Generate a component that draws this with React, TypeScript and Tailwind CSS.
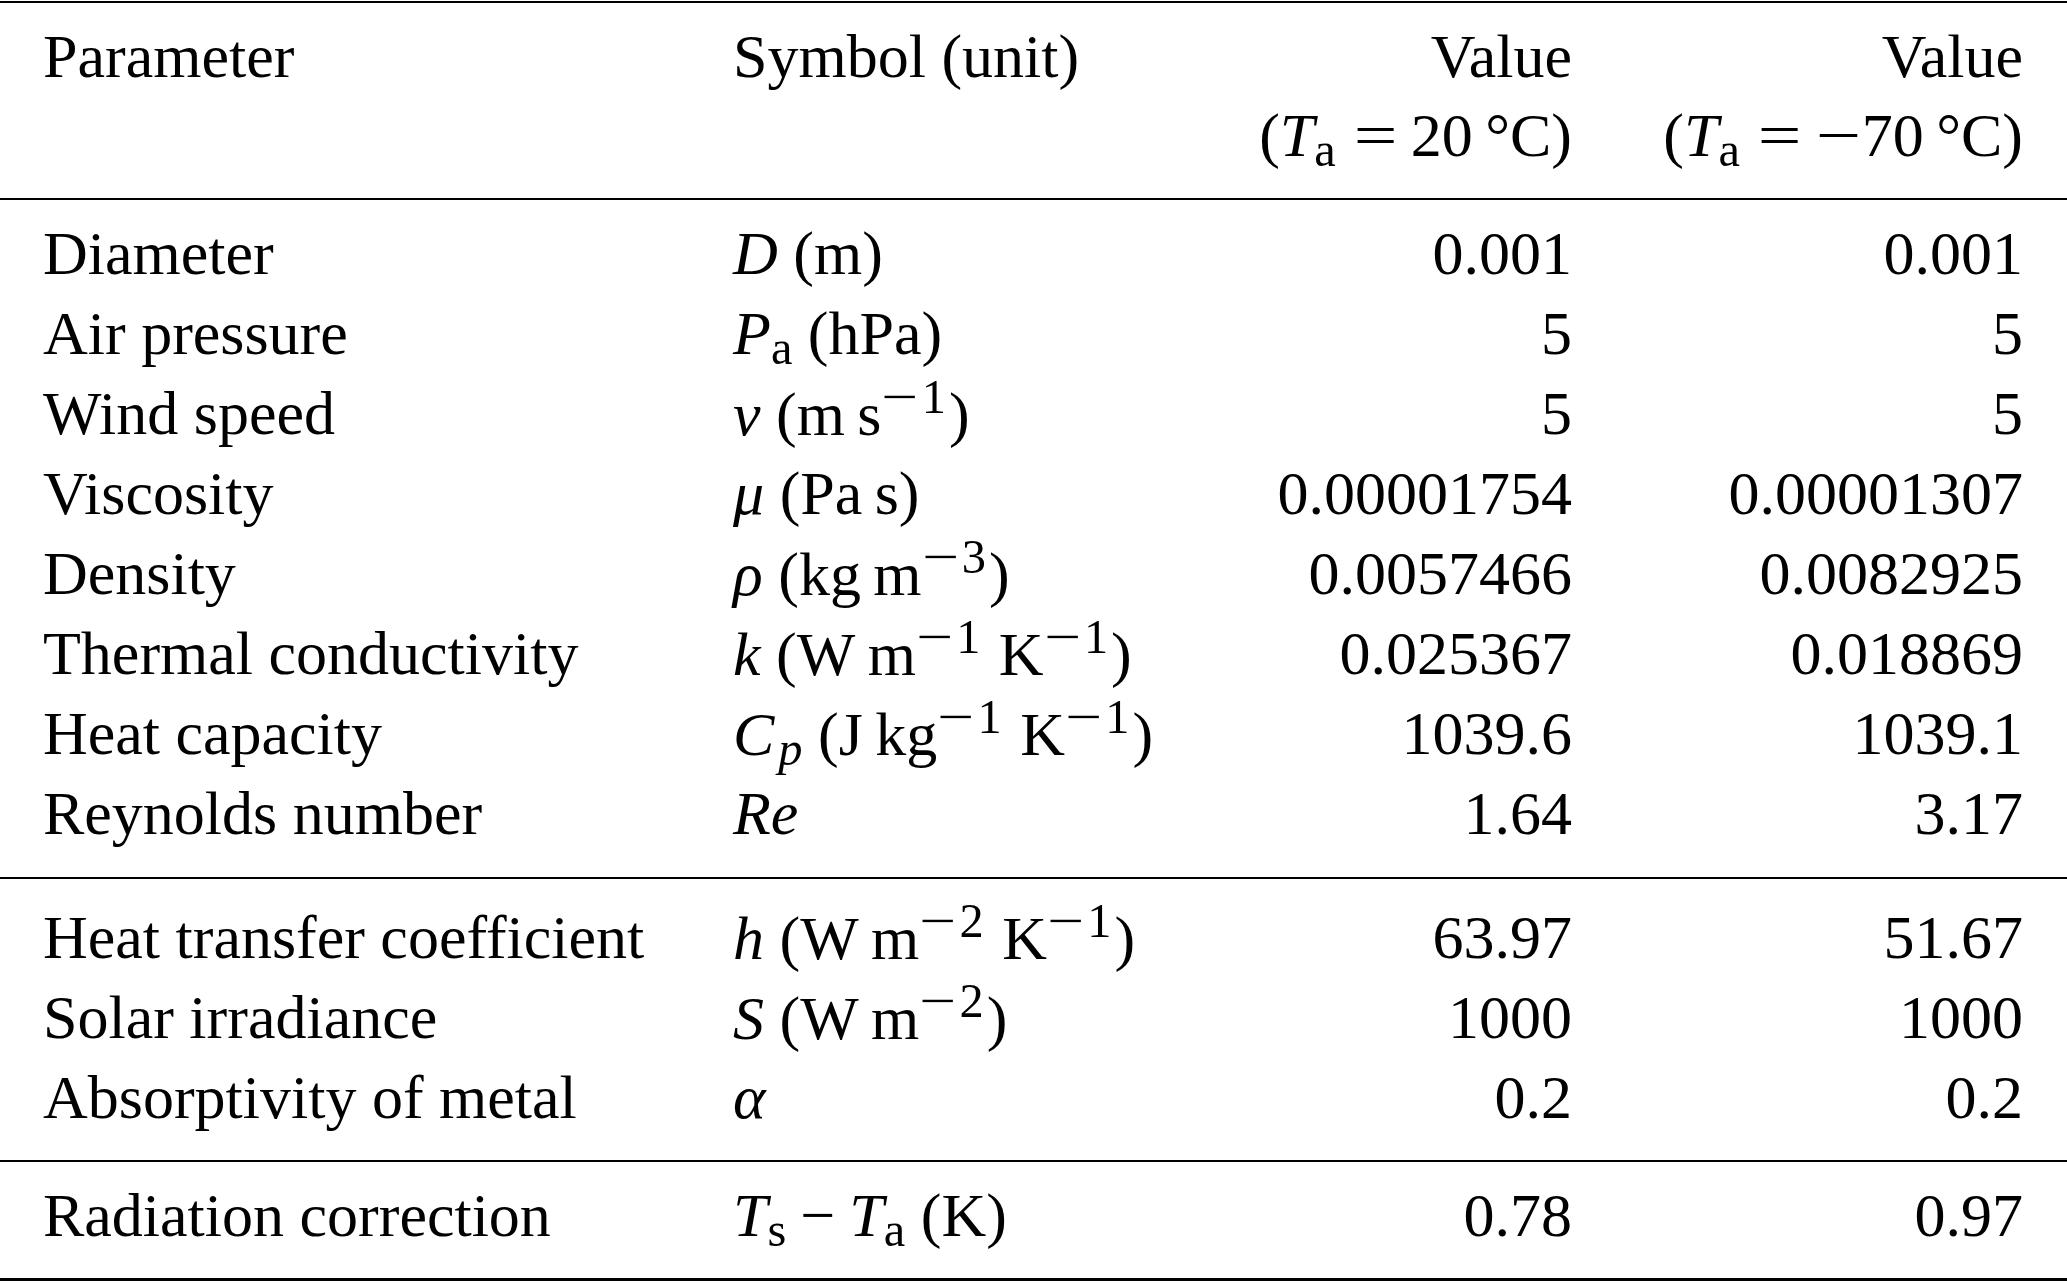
import React from "react";

type Kids = { children: React.ReactNode };

// math bits
const I = ({ children }: Kids) => <span className="italic">{children}</span>;
const Minus = () => (
  <span className="inline-block scale-x-[1.35] ml-[5px] mr-[8px]">−</span>
);
// superscript with a negative exponent, e.g. ^{-1}
const Sup = ({ children }: Kids) => (
  <span className="text-[0.78em] align-[22px] leading-none mr-[3px]">
    <Minus />
    {children}
  </span>
);
const Sub = ({ children }: Kids) => (
  <span className="text-[0.78em] align-[-10px] leading-none">{children}</span>
);
const Eq = () => (
  <span className="inline-block scale-x-[1.25] ml-[22px] mr-[18px]">=</span>
);

type Row = [string, React.ReactNode, string, string];

const physical: Row[] = [
  ["Diameter", <><I>D</I> (m)</>, "0.001", "0.001"],
  ["Air pressure", <><I>P</I><Sub>a</Sub> (hPa)</>, "5", "5"],
  ["Wind speed", <><I>v</I> (m{"\u2009"}s<Sup>1</Sup>)</>, "5", "5"],
  ["Viscosity", <><I>μ</I> (Pa{"\u2009"}s)</>, "0.00001754", "0.00001307"],
  ["Density", <><I>ρ</I> (kg{"\u2009"}m<Sup>3</Sup>)</>, "0.0057466", "0.0082925"],
  [
    "Thermal conductivity",
    <><I>k</I> (W{"\u2009"}m<Sup>1</Sup> K<Sup>1</Sup>)</>,
    "0.025367",
    "0.018869",
  ],
  [
    "Heat capacity",
    <><I>C</I><Sub><span className="italic ml-[4px]">p</span></Sub> (J{"\u2009"}kg<Sup>1</Sup> K<Sup>1</Sup>)</>,
    "1039.6",
    "1039.1",
  ],
  ["Reynolds number", <I>Re</I>, "1.64", "3.17"],
];

const radiative: Row[] = [
  [
    "Heat transfer coefficient",
    <><I>h</I> (W{"\u2009"}m<Sup>2</Sup> K<Sup>1</Sup>)</>,
    "63.97",
    "51.67",
  ],
  ["Solar irradiance", <><I>S</I> (W{"\u2009"}m<Sup>2</Sup>)</>, "1000", "1000"],
  ["Absorptivity of metal", <I>α</I>, "0.2", "0.2"],
];

const result: Row[] = [
  [
    "Radiation correction",
    <><I>T</I><Sub>s</Sub><span className="mx-[14px]">−</span><I>T</I><Sub>a</Sub> (K)</>,
    "0.78",
    "0.97",
  ],
];

const cols = "grid grid-cols-[690px_520px_319px_451px]";

const TableRow = ({ row }: { row: Row }) => (
  <div className={`${cols} h-[80px] leading-[80px] whitespace-nowrap`}>
    <div>{row[0]}</div>
    <div>{row[1]}</div>
    <div className="text-right">{row[2]}</div>
    <div className="text-right">{row[3]}</div>
  </div>
);

export default function App() {
  return (
    <div className="min-h-screen w-full bg-white text-black font-['Liberation_Serif','Times_New_Roman',serif] text-[62px]">
      <div className="pt-[1px]">
        <div className="h-[2px] bg-black" />
      </div>

      {/* header */}
      <div className={`${cols} pl-[43px] pt-[13px] pb-[19px] leading-[80px] whitespace-nowrap`}>
        <div>Parameter</div>
        <div>Symbol (unit)</div>
        <div className="text-right">
          <div>Value</div>
          <div className="-mt-[1px] mb-[4px]">
            (<I>T</I><Sub>a</Sub><Eq />20{"\u2009"}°C)
          </div>
        </div>
        <div className="text-right">
          <div>Value</div>
          <div className="-mt-[1px] mb-[4px]">
            (<I>T</I><Sub>a</Sub><Eq />
            <span className="inline-block scale-x-[1.3] mx-[6px]">−</span>70{"\u2009"}°C)
          </div>
        </div>
      </div>

      <div className="h-[2px] bg-black" />
      <div className="pl-[43px] pt-[13px] pb-[24px]">
        {physical.map((r) => (
          <TableRow key={r[0]} row={r} />
        ))}
      </div>

      <div className="h-[2px] bg-black" />
      <div className="pl-[43px] pt-[18px] pb-[23px]">
        {radiative.map((r) => (
          <TableRow key={r[0]} row={r} />
        ))}
      </div>

      <div className="h-[2px] bg-black" />
      <div className="pl-[43px] pt-[13px] pb-[23px]">
        {result.map((r) => (
          <TableRow key={r[0]} row={r} />
        ))}
      </div>
      <div className="h-[3px] bg-black" />
    </div>
  );
}
